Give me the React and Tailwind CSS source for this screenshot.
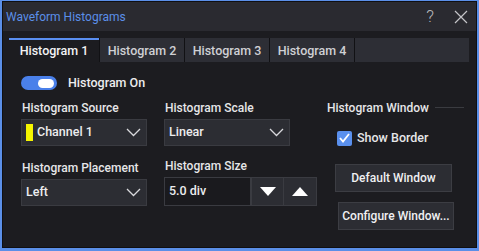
import React from "react";

const font = { fontFamily: "Roboto, 'Noto Sans', sans-serif" };

const Chevron = () => (
  <svg width="15" height="9" viewBox="0 0 15 9" fill="none">
    <path d="M1 1 L7.5 7.5 L14 1" stroke="#d8d8dc" strokeWidth="1.3" />
  </svg>
);

const Select = ({ children, swatch }) => (
  <div className="flex h-[27px] w-[126px] items-center border border-[#3a3b41] bg-[#2c2d33] pl-[4px] pr-[5px]">
    {swatch && <span className="mr-[4px] h-[17px] w-[7px] bg-[#f5f500]" />}
    <span className="flex-1 text-[12.5px] text-[#ececee]">{children}</span>
    <Chevron />
  </div>
);

const Tab = ({ label, active }) => (
  <div
    className={
      active
        ? "flex h-[24px] w-[90px] items-center justify-center border-t-2 border-[#5a8ef0] bg-[#1c1c20] text-[#f2f2f4]"
        : "flex h-[24px] w-[85px] items-center justify-center border-l border-[#111114] bg-[#2d2e35] pt-[2px] text-[#cfd0d4]"
    }
  >
    {label}
  </div>
);

export default function App() {
  return (
    <div
      className="h-[251px] w-[479px] bg-[#5b8fe8] px-[2px] pb-[3px] pt-[1px] font-medium"
      style={font}
    >
      <div className="flex h-full flex-col border border-[#0f0f12] bg-[#1c1c20]">
        <div className="flex h-[29px] items-center bg-[#2a2a30] pl-[3px] pr-[8px]">
          <span className="flex-1 text-[12px] font-normal text-[#5b8fe8]">Waveform Histograms</span>
          <span className="mr-[20px] text-[17px] font-light text-[#b8b8bc]">?</span>
          <svg width="14" height="14" viewBox="0 0 14 14">
            <path d="M1 1 L13 13 M13 1 L1 13" stroke="#c4c4c8" strokeWidth="1.2" />
          </svg>
        </div>

        <div className="ml-[6px] mr-[7px] mt-[7px] flex text-[12.5px]">
          <Tab label="Histogram 1" active />
          <Tab label="Histogram 2" />
          <Tab label="Histogram 3" />
          <Tab label="Histogram 4" />
          <div className="h-[24px] flex-1 border-l border-[#111114] bg-[#2d2e35]" />
        </div>

        <div className="ml-[18px] mt-[12px] flex items-center">
          <div className="flex h-[14px] w-[36px] items-center justify-end rounded-full bg-[#4a80ea] pr-[3px]">
            <div className="h-[9px] w-[16px] rounded-full bg-white" />
          </div>
          <span className="ml-[11px] text-[12.5px] text-[#ececee]">Histogram On</span>
        </div>

        <div className="ml-[18px] mt-[6px] flex whitespace-nowrap text-[12px] text-[#e6e6e8]">
          <div className="flex w-[143px] flex-col">
            <span className="ml-[1px] h-[18px] leading-[18px]">Histogram Source</span>
            <div className="mt-[2px]">
              <Select swatch>Channel 1</Select>
            </div>
            <span className="ml-[1px] mt-[13px] h-[18px] leading-[18px]">Histogram Placement</span>
            <div className="mt-[2px]">
              <Select>Left</Select>
            </div>
          </div>

          <div className="flex w-[163px] flex-col">
            <span className="ml-[1px] h-[18px] leading-[18px]">Histogram Scale</span>
            <div className="mt-[2px]">
              <Select>Linear</Select>
            </div>
            <span className="ml-[1px] mt-[11px] h-[18px] leading-[18px]">Histogram Size</span>
            <div className="mt-[2px] flex h-[29px] w-[153px]">
              <div className="flex w-[88px] items-center border border-[#3a3b41] bg-[#1a1a1e] pl-[4px] text-[12.5px] text-[#ececee]">
                5.0 div
              </div>
              <div className="flex w-[33px] items-center justify-center border border-[#3a3b41] bg-[#2c2d33]">
                <svg width="16" height="9" viewBox="0 0 16 9">
                  <path d="M0 0 H16 L8 9 Z" fill="#ffffff" />
                </svg>
              </div>
              <div className="flex w-[33px] items-center justify-center border border-l-0 border-[#3a3b41] bg-[#2c2d33]">
                <svg width="16" height="9" viewBox="0 0 16 9">
                  <path d="M0 9 H16 L8 0 Z" fill="#ffffff" />
                </svg>
              </div>
            </div>
          </div>

          <div className="flex w-[140px] flex-col">
            <div className="flex h-[18px] items-center">
              <span>Histogram Window</span>
              <div className="ml-[6px] mr-[3px] h-px flex-1 bg-[#3a3b40]" />
            </div>
            <div className="ml-[10px] mt-[12px] flex items-center text-[12.5px]">
              <div className="flex h-[15px] w-[15px] items-center justify-center rounded-[2px] bg-[#5a90ee]">
                <svg width="11" height="10" viewBox="0 0 11 10" fill="none">
                  <path d="M1 5 L4 8.5 L10 1" stroke="#ffffff" strokeWidth="1.8" />
                </svg>
              </div>
              <span className="ml-[5px]">Show Border</span>
            </div>
            <div className="ml-[8px] mt-[16px] flex h-[28px] w-[117px] items-center justify-center border border-[#3c3d43] bg-[#2c2d33] text-[#f0f0f2]">
              Default Window
            </div>
            <div className="ml-[11px] mt-[10px] flex h-[28px] w-[116px] items-center justify-center border border-[#3c3d43] bg-[#2c2d33] text-[#f0f0f2]">
              Configure Window...
            </div>
          </div>
        </div>
      </div>
    </div>
  );
}
